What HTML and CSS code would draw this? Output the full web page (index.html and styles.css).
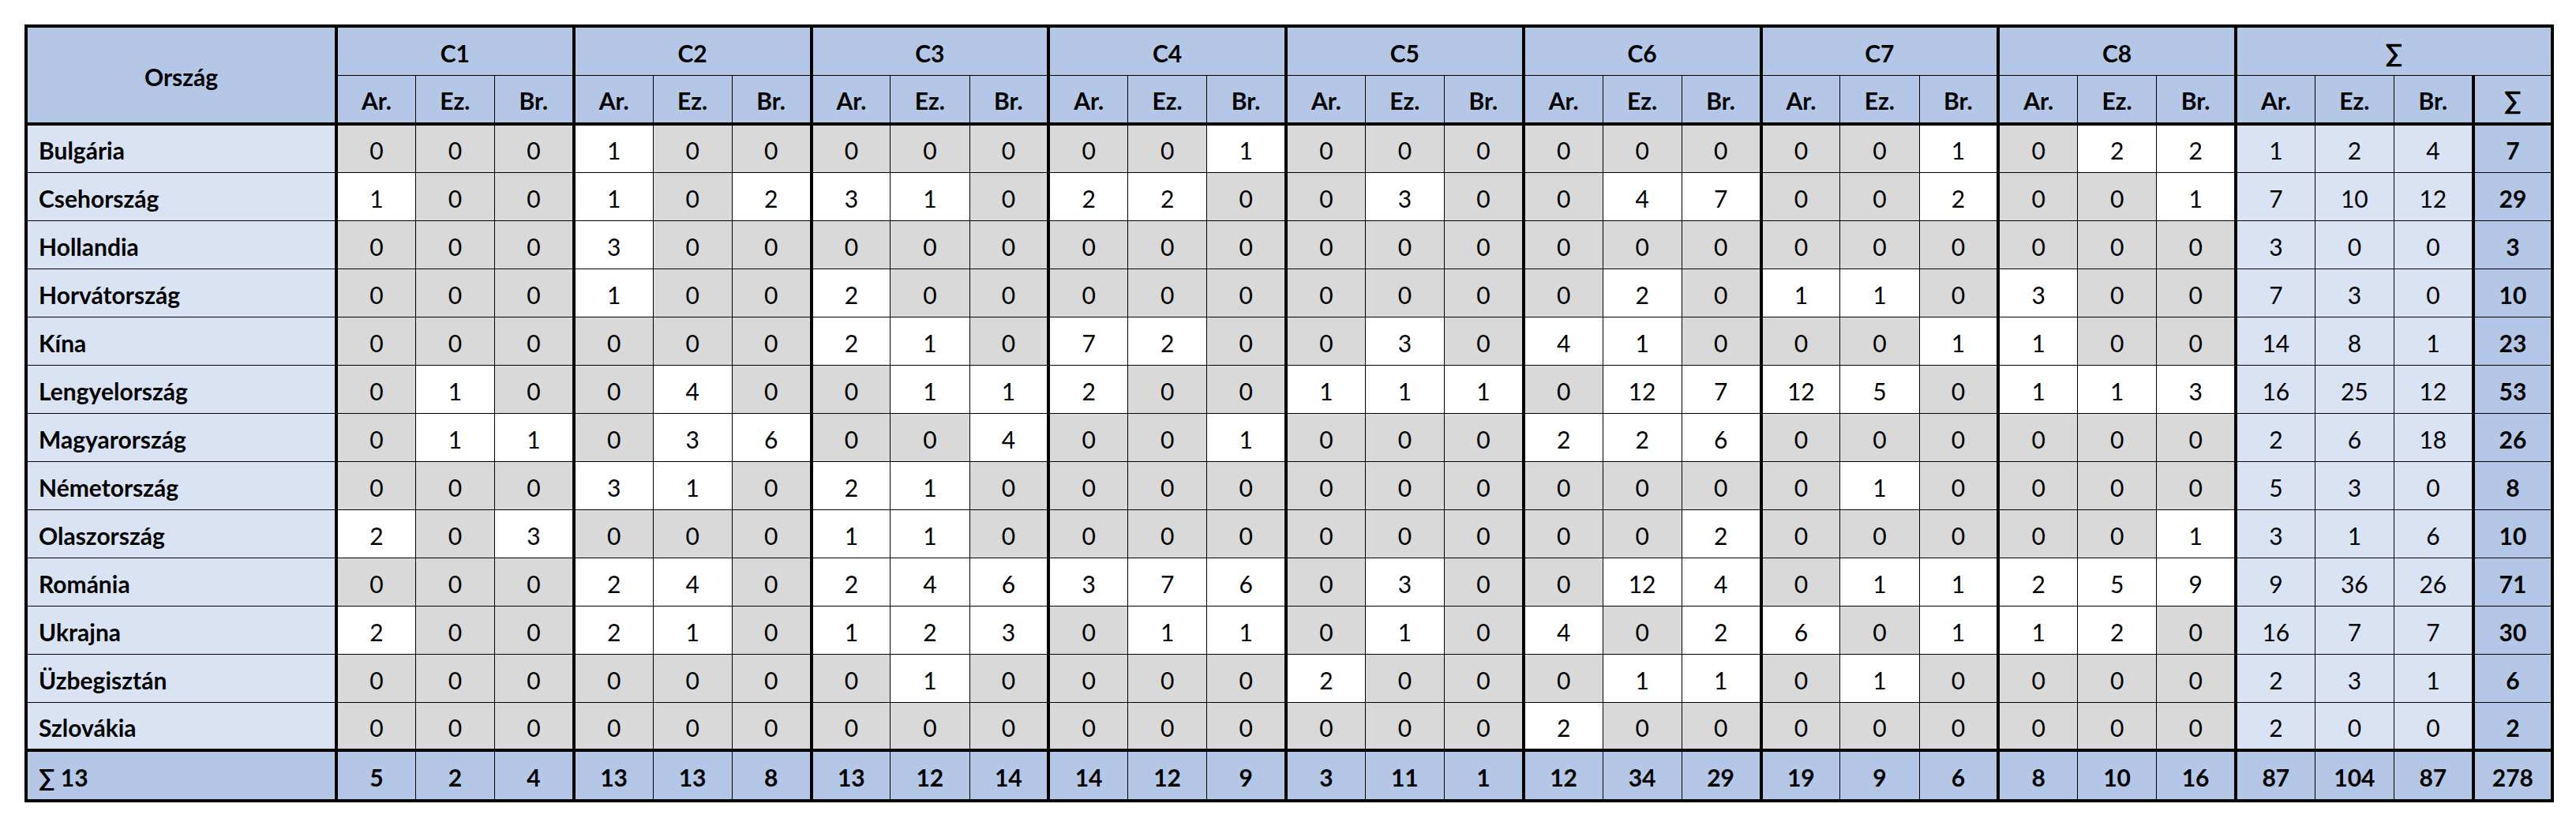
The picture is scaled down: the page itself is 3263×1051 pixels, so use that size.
FILE: index.html
```html
<!DOCTYPE html>
<html lang="hu">
<head>
<meta charset="utf-8">
<title>Ország táblázat</title>
<link rel="stylesheet" href="styles.css">
</head>
<body>
<table class="tbl">
  <colgroup class="cg"><col class="c-name"></colgroup>
  <colgroup class="cg"><col class="c"><col class="c"><col class="c"></colgroup>
  <colgroup class="cg"><col class="c"><col class="c"><col class="c"></colgroup>
  <colgroup class="cg"><col class="c"><col class="c"><col class="c"></colgroup>
  <colgroup class="cg"><col class="c"><col class="c"><col class="c"></colgroup>
  <colgroup class="cg"><col class="c"><col class="c"><col class="c"></colgroup>
  <colgroup class="cg"><col class="c"><col class="c"><col class="c"></colgroup>
  <colgroup class="cg"><col class="c"><col class="c"><col class="c"></colgroup>
  <colgroup class="cg"><col class="c"><col class="c"><col class="c"></colgroup>
  <colgroup class="cg"><col class="c"><col class="c"><col class="c"></colgroup>
  <colgroup class="cg"><col class="c"></colgroup>
  <thead>
    <tr class="h1">
      <th rowspan="2" class="name-h">Ország</th>
      <th colspan="3">C1</th><th colspan="3">C2</th><th colspan="3">C3</th><th colspan="3">C4</th>
      <th colspan="3">C5</th><th colspan="3">C6</th><th colspan="3">C7</th><th colspan="3">C8</th>
      <th colspan="4" class="sig">∑</th>
    </tr>
    <tr class="h2">
      <th>Ar.</th><th>Ez.</th><th>Br.</th>
      <th>Ar.</th><th>Ez.</th><th>Br.</th>
      <th>Ar.</th><th>Ez.</th><th>Br.</th>
      <th>Ar.</th><th>Ez.</th><th>Br.</th>
      <th>Ar.</th><th>Ez.</th><th>Br.</th>
      <th>Ar.</th><th>Ez.</th><th>Br.</th>
      <th>Ar.</th><th>Ez.</th><th>Br.</th>
      <th>Ar.</th><th>Ez.</th><th>Br.</th>
      <th>Ar.</th><th>Ez.</th><th>Br.</th>
      <th class="sig">∑</th>
    </tr>
  </thead>
  <tbody>
    <tr><th class="name">Bulgária</th>
      <td class="z">0</td><td class="z">0</td><td class="z">0</td>
      <td class="nz">1</td><td class="z">0</td><td class="z">0</td>
      <td class="z">0</td><td class="z">0</td><td class="z">0</td>
      <td class="z">0</td><td class="z">0</td><td class="nz">1</td>
      <td class="z">0</td><td class="z">0</td><td class="z">0</td>
      <td class="z">0</td><td class="z">0</td><td class="z">0</td>
      <td class="z">0</td><td class="z">0</td><td class="nz">1</td>
      <td class="z">0</td><td class="nz">2</td><td class="nz">2</td>
      <td class="s">1</td><td class="s">2</td><td class="s">4</td><td class="t">7</td></tr>
    <tr><th class="name">Csehország</th>
      <td class="nz">1</td><td class="z">0</td><td class="z">0</td>
      <td class="nz">1</td><td class="z">0</td><td class="nz">2</td>
      <td class="nz">3</td><td class="nz">1</td><td class="z">0</td>
      <td class="nz">2</td><td class="nz">2</td><td class="z">0</td>
      <td class="z">0</td><td class="nz">3</td><td class="z">0</td>
      <td class="z">0</td><td class="nz">4</td><td class="nz">7</td>
      <td class="z">0</td><td class="z">0</td><td class="nz">2</td>
      <td class="z">0</td><td class="z">0</td><td class="nz">1</td>
      <td class="s">7</td><td class="s">10</td><td class="s">12</td><td class="t">29</td></tr>
    <tr><th class="name">Hollandia</th>
      <td class="z">0</td><td class="z">0</td><td class="z">0</td>
      <td class="nz">3</td><td class="z">0</td><td class="z">0</td>
      <td class="z">0</td><td class="z">0</td><td class="z">0</td>
      <td class="z">0</td><td class="z">0</td><td class="z">0</td>
      <td class="z">0</td><td class="z">0</td><td class="z">0</td>
      <td class="z">0</td><td class="z">0</td><td class="z">0</td>
      <td class="z">0</td><td class="z">0</td><td class="z">0</td>
      <td class="z">0</td><td class="z">0</td><td class="z">0</td>
      <td class="s">3</td><td class="s">0</td><td class="s">0</td><td class="t">3</td></tr>
    <tr><th class="name">Horvátország</th>
      <td class="z">0</td><td class="z">0</td><td class="z">0</td>
      <td class="nz">1</td><td class="z">0</td><td class="z">0</td>
      <td class="nz">2</td><td class="z">0</td><td class="z">0</td>
      <td class="z">0</td><td class="z">0</td><td class="z">0</td>
      <td class="z">0</td><td class="z">0</td><td class="z">0</td>
      <td class="z">0</td><td class="nz">2</td><td class="z">0</td>
      <td class="nz">1</td><td class="nz">1</td><td class="z">0</td>
      <td class="nz">3</td><td class="z">0</td><td class="z">0</td>
      <td class="s">7</td><td class="s">3</td><td class="s">0</td><td class="t">10</td></tr>
    <tr><th class="name">Kína</th>
      <td class="z">0</td><td class="z">0</td><td class="z">0</td>
      <td class="z">0</td><td class="z">0</td><td class="z">0</td>
      <td class="nz">2</td><td class="nz">1</td><td class="z">0</td>
      <td class="nz">7</td><td class="nz">2</td><td class="z">0</td>
      <td class="z">0</td><td class="nz">3</td><td class="z">0</td>
      <td class="nz">4</td><td class="nz">1</td><td class="z">0</td>
      <td class="z">0</td><td class="z">0</td><td class="nz">1</td>
      <td class="nz">1</td><td class="z">0</td><td class="z">0</td>
      <td class="s">14</td><td class="s">8</td><td class="s">1</td><td class="t">23</td></tr>
    <tr><th class="name">Lengyelország</th>
      <td class="z">0</td><td class="nz">1</td><td class="z">0</td>
      <td class="z">0</td><td class="nz">4</td><td class="z">0</td>
      <td class="z">0</td><td class="nz">1</td><td class="nz">1</td>
      <td class="nz">2</td><td class="z">0</td><td class="z">0</td>
      <td class="nz">1</td><td class="nz">1</td><td class="nz">1</td>
      <td class="z">0</td><td class="nz">12</td><td class="nz">7</td>
      <td class="nz">12</td><td class="nz">5</td><td class="z">0</td>
      <td class="nz">1</td><td class="nz">1</td><td class="nz">3</td>
      <td class="s">16</td><td class="s">25</td><td class="s">12</td><td class="t">53</td></tr>
    <tr><th class="name">Magyarország</th>
      <td class="z">0</td><td class="nz">1</td><td class="nz">1</td>
      <td class="z">0</td><td class="nz">3</td><td class="nz">6</td>
      <td class="z">0</td><td class="z">0</td><td class="nz">4</td>
      <td class="z">0</td><td class="z">0</td><td class="nz">1</td>
      <td class="z">0</td><td class="z">0</td><td class="z">0</td>
      <td class="nz">2</td><td class="nz">2</td><td class="nz">6</td>
      <td class="z">0</td><td class="z">0</td><td class="z">0</td>
      <td class="z">0</td><td class="z">0</td><td class="z">0</td>
      <td class="s">2</td><td class="s">6</td><td class="s">18</td><td class="t">26</td></tr>
    <tr><th class="name">Németország</th>
      <td class="z">0</td><td class="z">0</td><td class="z">0</td>
      <td class="nz">3</td><td class="nz">1</td><td class="z">0</td>
      <td class="nz">2</td><td class="nz">1</td><td class="z">0</td>
      <td class="z">0</td><td class="z">0</td><td class="z">0</td>
      <td class="z">0</td><td class="z">0</td><td class="z">0</td>
      <td class="z">0</td><td class="z">0</td><td class="z">0</td>
      <td class="z">0</td><td class="nz">1</td><td class="z">0</td>
      <td class="z">0</td><td class="z">0</td><td class="z">0</td>
      <td class="s">5</td><td class="s">3</td><td class="s">0</td><td class="t">8</td></tr>
    <tr><th class="name">Olaszország</th>
      <td class="nz">2</td><td class="z">0</td><td class="nz">3</td>
      <td class="z">0</td><td class="z">0</td><td class="z">0</td>
      <td class="nz">1</td><td class="nz">1</td><td class="z">0</td>
      <td class="z">0</td><td class="z">0</td><td class="z">0</td>
      <td class="z">0</td><td class="z">0</td><td class="z">0</td>
      <td class="z">0</td><td class="z">0</td><td class="nz">2</td>
      <td class="z">0</td><td class="z">0</td><td class="z">0</td>
      <td class="z">0</td><td class="z">0</td><td class="nz">1</td>
      <td class="s">3</td><td class="s">1</td><td class="s">6</td><td class="t">10</td></tr>
    <tr><th class="name">Románia</th>
      <td class="z">0</td><td class="z">0</td><td class="z">0</td>
      <td class="nz">2</td><td class="nz">4</td><td class="z">0</td>
      <td class="nz">2</td><td class="nz">4</td><td class="nz">6</td>
      <td class="nz">3</td><td class="nz">7</td><td class="nz">6</td>
      <td class="z">0</td><td class="nz">3</td><td class="z">0</td>
      <td class="z">0</td><td class="nz">12</td><td class="nz">4</td>
      <td class="z">0</td><td class="nz">1</td><td class="nz">1</td>
      <td class="nz">2</td><td class="nz">5</td><td class="nz">9</td>
      <td class="s">9</td><td class="s">36</td><td class="s">26</td><td class="t">71</td></tr>
    <tr><th class="name">Ukrajna</th>
      <td class="nz">2</td><td class="z">0</td><td class="z">0</td>
      <td class="nz">2</td><td class="nz">1</td><td class="z">0</td>
      <td class="nz">1</td><td class="nz">2</td><td class="nz">3</td>
      <td class="z">0</td><td class="nz">1</td><td class="nz">1</td>
      <td class="z">0</td><td class="nz">1</td><td class="z">0</td>
      <td class="nz">4</td><td class="z">0</td><td class="nz">2</td>
      <td class="nz">6</td><td class="z">0</td><td class="nz">1</td>
      <td class="nz">1</td><td class="nz">2</td><td class="z">0</td>
      <td class="s">16</td><td class="s">7</td><td class="s">7</td><td class="t">30</td></tr>
    <tr><th class="name">Üzbegisztán</th>
      <td class="z">0</td><td class="z">0</td><td class="z">0</td>
      <td class="z">0</td><td class="z">0</td><td class="z">0</td>
      <td class="z">0</td><td class="nz">1</td><td class="z">0</td>
      <td class="z">0</td><td class="z">0</td><td class="z">0</td>
      <td class="nz">2</td><td class="z">0</td><td class="z">0</td>
      <td class="z">0</td><td class="nz">1</td><td class="nz">1</td>
      <td class="z">0</td><td class="nz">1</td><td class="z">0</td>
      <td class="z">0</td><td class="z">0</td><td class="z">0</td>
      <td class="s">2</td><td class="s">3</td><td class="s">1</td><td class="t">6</td></tr>
    <tr><th class="name">Szlovákia</th>
      <td class="z">0</td><td class="z">0</td><td class="z">0</td>
      <td class="z">0</td><td class="z">0</td><td class="z">0</td>
      <td class="z">0</td><td class="z">0</td><td class="z">0</td>
      <td class="z">0</td><td class="z">0</td><td class="z">0</td>
      <td class="z">0</td><td class="z">0</td><td class="z">0</td>
      <td class="nz">2</td><td class="z">0</td><td class="z">0</td>
      <td class="z">0</td><td class="z">0</td><td class="z">0</td>
      <td class="z">0</td><td class="z">0</td><td class="z">0</td>
      <td class="s">2</td><td class="s">0</td><td class="s">0</td><td class="t">2</td></tr>
  </tbody>
  <tfoot>
    <tr><th class="name">∑ 13</th>
      <td>5</td><td>2</td><td>4</td>
      <td>13</td><td>13</td><td>8</td>
      <td>13</td><td>12</td><td>14</td>
      <td>14</td><td>12</td><td>9</td>
      <td>3</td><td>11</td><td>1</td>
      <td>12</td><td>34</td><td>29</td>
      <td>19</td><td>9</td><td>6</td>
      <td>8</td><td>10</td><td>16</td>
      <td>87</td><td>104</td><td>87</td><td>278</td></tr>
  </tfoot>
</table>
</body>
</html>
```
FILE: styles.css
```css
html, body {
  margin: 0;
  background: #ffffff;
}

body {
  padding: 31px 0 0 31px;
  font-family: Lato, "Open Sans", "Liberation Sans", sans-serif;
  color: #000000;
}

.tbl {
  border-collapse: collapse;
  table-layout: fixed;
  width: 3204px;
  border: 4px solid #000000;
  font-size: 30px;
}

.cg {
  border-left: 4px solid #000000;
  border-right: 4px solid #000000;
}

col.c-name {
  width: 393px;
}

col.c {
  width: 100.25px;
}

th,
td {
  border: 1px solid #000000;
  padding: 4px 0 0 0;
  text-align: center;
  vertical-align: middle;
  line-height: 1;
  font-weight: 400;
}

thead {
  border-bottom: 4px solid #000000;
}

tfoot {
  border-top: 4px solid #000000;
}

thead th {
  background: #b4c7e7;
  font-weight: 700;
}

thead th.sig {
  font-size: 32px;
  font-weight: 700;
}

tr.h1,
tr.h2 {
  height: 62px;
}

tbody tr {
  height: 61px;
}

tfoot tr {
  height: 64px;
}

th.name {
  text-align: left;
  padding-left: 14px;
  background: #dae3f3;
  font-weight: 700;
}

td.z {
  background: #d9d9d9;
}

td.nz {
  background: #ffffff;
}

td.s {
  background: #dae3f3;
}

td.t {
  background: #b4c7e7;
  font-weight: 700;
}

tfoot th,
tfoot td,
tfoot th.name {
  background: #b4c7e7;
  font-weight: 700;
}
```
